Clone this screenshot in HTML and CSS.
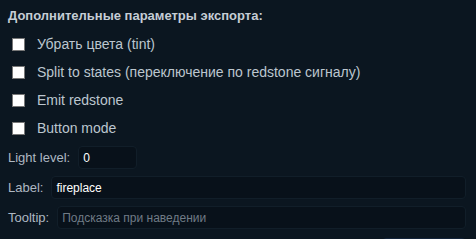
FILE: index.html
```
<html>
    <head>
        <link rel="stylesheet" href="styles.css">
    </head>
    <body>
        <div class="panel">
            <h4 class="title">Дополнительные параметры экспорта:</h4>
            <label class="check"><span class="box"></span>Убрать цвета (tint)</label>
            <label class="check"><span class="box"></span>Split to states (переключение по redstone сигналу)</label>
            <label class="check"><span class="box"></span>Emit redstone</label>
            <label class="check"><span class="box"></span>Button mode</label>
            <div class="field">
                <span class="lbl">Light level:</span>
                <input type="text" class="inp short" value="0">
            </div>
            <div class="field">
                <span class="lbl">Label:</span>
                <input type="text" class="inp" value="fireplace">
            </div>
            <div class="field">
                <span class="lbl">Tooltip:</span>
                <input type="text" class="inp" placeholder="Подсказка при наведении">
            </div>
            <div class="more"><span class="btn"></span></div>
        </div>
    </body>
</html>
```
FILE: styles.css
```
body {margin: 0; background-color: #0b1620; font-family: "Liberation Sans", Arial, sans-serif; font-size: 13px; color: #b7c1cb; overflow: hidden;}
.panel {padding: 8px 10px 0 8px; display: flex; flex-direction: column;}
.title {margin: 0 0 6px 0; font-size: 13px; font-weight: bold; color: #c5cdd5; line-height: 16px;}
.check {display: flex; align-items: center; height: 28px; font-size: 14px; color: #bcc6cf;}
.box {width: 11px; height: 11px; background: #fff; border: 1px solid #777; margin: 0 12px 0 4px;}
.field {display: flex; align-items: center; gap: 8px; margin-top: 7px;}
.field:first-of-type {margin-top: 4px;}
.lbl {color: #aeb8c2; white-space: nowrap;}
.inp {flex: 1; height: 23px; box-sizing: border-box; background: #08111a; border: 1px solid #111e29; border-radius: 4px; color: #ffffff; font-family: "Liberation Sans", Arial, sans-serif; font-size: 12px; padding: 0 4px; outline: none;}
.inp.short {flex: none; width: 59px;}
.inp::placeholder {color: #707b86;}
.more {display: flex; justify-content: flex-end; margin-top: 9px;}
.btn {width: 82px; height: 24px; border: 1px solid #13243a; border-radius: 4px; background: #0a1520;}
```
